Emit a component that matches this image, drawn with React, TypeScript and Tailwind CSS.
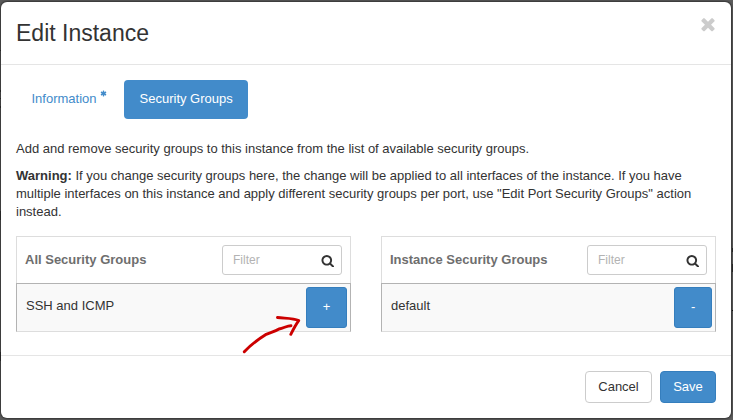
import React from 'react';

type IconProps = { className: string; d: string };

function Icon({ className, d }: IconProps) {
  return (
    <svg viewBox="0 0 1792 1792" fill="currentColor" className={className} aria-hidden="true">
      <path d={d} />
    </svg>
  );
}

const SEARCH =
  'M1216 832q0-185-131.5-316.5t-316.5-131.5-316.5 131.5-131.5 316.5 131.5 316.5 316.5 131.5 316.5-131.5 131.5-316.5zm512 832q0 52-38 90t-90 38q-54 0-90-38l-343-342q-179 124-399 124-143 0-273.5-55.5t-225-150-150-225-55.5-273.5 55.5-273.5 150-225 225-150 273.5-55.5 273.5 55.5 225 150 150 225 55.5 273.5q0 220-124 399l343 343q37 37 37 90z';
const TIMES =
  'M1490 1322q0 40-28 68l-136 136q-28 28-68 28t-68-28l-294-294-294 294q-28 28-68 28t-68-28l-136-136q-28-28-28-68t28-68l294-294-294-294q-28-28-28-68t28-68l136-136q28-28 68-28t68 28l294 294 294-294q28-28 68-28t68 28l136 136q28 28 28 68t-28 68l-294 294 294 294q28 28 28 68z';
const ASTERISK =
  'M1546 1050q46 26 59.5 77.5t-12.5 97.5l-64 110q-26 46-77.5 59.5t-97.5-12.5l-266-153v307q0 52-38 90t-90 38h-128q-52 0-90-38t-38-90v-307l-266 153q-46 26-97.5 12.5t-77.5-59.5l-64-110q-26-46-12.5-97.5t59.5-77.5l266-154-266-154q-46-26-59.5-77.5t12.5-97.5l64-110q26-46 77.5-59.5t97.5 12.5l266 153v-307q0-52 38-90t90-38h128q52 0 90 38t38 90v307l266-153q46-26 97.5-12.5t77.5 59.5l64 110q26 46 12.5 97.5t-59.5 77.5l-266 154z';

type GroupTableProps = { title: string; item: string; action: string };

function GroupTable({ title, item, action }: GroupTableProps) {
  return (
    <section className="flex h-24 w-[335px] flex-col">
      <div className="flex h-[47px] items-center justify-between border border-b-0 border-[#dddddd] px-2">
        <h2 className="font-bold text-[#6e6e6e]">{title}</h2>
        <div className="flex h-[30px] w-[120px] items-center justify-between rounded-[3px] border border-[#cccccc] bg-white pr-[7px] pl-2.5">
          <input
            placeholder="Filter"
            className="w-16 text-xs leading-[18px] outline-none placeholder:text-[#b3b3b3]"
          />
          <Icon d={SEARCH} className="mt-px h-[13.5px] w-[13.5px] text-[#333333]" />
        </div>
      </div>
      <div className="flex h-[49px] justify-between border border-b-[#dddddd] border-t-[#b3b3b3] border-x-[#b3b3b3] bg-[#f9f9f9] pt-[3px] pr-[3px] pl-[9px]">
        <span className="pt-[10px]">{item}</span>
        <button className="h-[41px] rounded-[3px] border border-[#357ebd] bg-[#428bca] px-[15.75px] pb-0.5 text-white">
          {action}
        </button>
      </div>
    </section>
  );
}

export default function App() {
  return (
    <div className="relative h-[420px] w-[733px] overflow-hidden bg-[#5c5c5c] pt-0.5 pl-px font-['Liberation_Sans',Arial,sans-serif] text-[13px] leading-[18px] text-[#333333]">
      <i className="absolute top-[50px] left-0 h-px w-px bg-black" />
      <i className="absolute top-[90px] left-0 h-0.5 w-px bg-black" />
      <i className="absolute top-[98px] left-0 h-px w-px bg-black" />
      <i className="absolute top-[106px] left-0 h-0.5 w-px bg-black" />
      <i className="absolute top-[211px] left-0 h-[9px] w-px bg-black" />
      <i className="absolute top-[352px] left-0 h-[9px] w-px bg-black" />
      <i className="absolute top-[248px] right-0 h-1 w-px bg-[#222222]" />
      <i className="absolute top-[264px] right-0 h-2 w-px bg-[#222222]" />
      <i className="absolute top-[310px] right-0 h-px w-px bg-black" />
      <main className="relative flex h-[416px] w-[730px] flex-col rounded-md bg-white shadow-[0_0_2px_1px_#333333]">
        <header className="flex h-[63px] justify-between border-b border-[#e5e5e5] pr-[15px] pl-[15px]">
          <h1 className="pt-[18px] text-[23px] leading-[26px]">Edit Instance</h1>
          <button aria-label="Close" className="mt-3 h-5 w-[17px] text-[#cccccc]">
            <Icon d={TIMES} className="-ml-px h-5 w-5" />
          </button>
        </header>
        <div className="h-[290px] px-[15px] pt-[15px]">
          <nav className="flex h-[39px] gap-0.5">
            <a className="flex items-center px-[15.5px] pb-0.5 text-[#428bca]">
              Information
              <Icon d={ASTERISK} className="mb-[11px] ml-[3px] h-[7px] w-[7px]" />
            </a>
            <a className="flex items-center rounded bg-[#428bca] px-[15.5px] pb-0.5 text-white">Security Groups</a>
          </nav>
          <p className="mt-[21px]">
            Add and remove security groups to this instance from the list of available security groups.
          </p>
          <p className="mt-[9px]">
            <b>Warning:</b> If you change security groups here, the change will be applied to all interfaces of the
            instance. If you have multiple interfaces on this instance and apply different security groups per port, use
            "Edit Port Security Groups" action instead.
          </p>
          <div className="mt-[15px] flex gap-[30px]">
            <GroupTable title="All Security Groups" item="SSH and ICMP" action="+" />
            <GroupTable title="Instance Security Groups" item="default" action="-" />
          </div>
        </div>
        <footer className="flex flex-1 justify-end gap-2 border-t border-[#e5e5e5] pt-[15px] pr-[15px]">
          <button className="h-8 w-[67px] rounded border border-[#cccccc] bg-white">Cancel</button>
          <button className="h-8 w-14 rounded border border-[#357ebd] bg-[#428bca] text-white">Save</button>
        </footer>
      </main>
      <svg
        viewBox="240 310 64 46"
        className="absolute top-[310px] left-[240px] h-[46px] w-16"
        fill="none"
        stroke="#cc0000"
        strokeWidth="2.9"
        strokeLinecap="round"
        strokeLinejoin="round"
      >
        <path d="M244.3 351.8 C250 345.5 257 340 265.5 334.7 C272 332 275 331.5 279 329 C284 328 287 325.7 291 325.7 M277.5 317.5 C284 318.5 293 317.8 298.7 320.6 C295.5 325 293 330 290.8 334.3" />
      </svg>
    </div>
  );
}
